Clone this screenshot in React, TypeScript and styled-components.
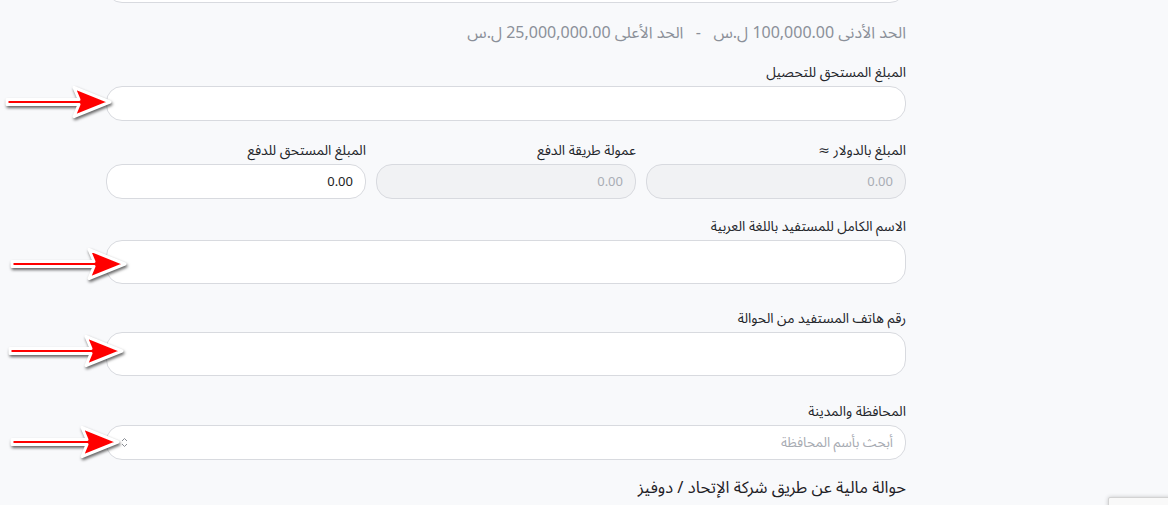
import React from 'react';
import styled, { createGlobalStyle } from 'styled-components';

const GlobalStyle = createGlobalStyle`
  html, body {
    margin: 0;
    padding: 0;
    background: #f8f9fb;
    overflow: hidden;
  }
  body {
    font-family: "Noto Sans Arabic", "DejaVu Sans", "Noto Sans", sans-serif;
  }
`;

const Page = styled.div`
  position: relative;
  width: 1168px;
  height: 505px;
  overflow: hidden;
  padding-left: 106px;
  box-sizing: border-box;
`;

const Form = styled.div`
  direction: rtl;
  width: 800px;
  margin-top: -32px;
  display: flex;
  flex-direction: column;
`;

const Input = styled.div<{ $h?: number; $disabled?: boolean }>`
  box-sizing: border-box;
  height: ${(p) => p.$h ?? 35}px;
  border: 1px solid #d8dadf;
  border-radius: 16px;
  background: ${(p) => (p.$disabled ? '#f1f2f4' : '#ffffff')};
  display: flex;
  align-items: center;
  justify-content: space-between;
  padding: 0 12px 0 14px;
  font-size: 13px;
  color: ${(p) => (p.$disabled ? '#a9adb4' : '#222')};
`;

const Limits = styled.div`
  margin-top: 18px;
  height: 24px;
  line-height: 24px;
  font-size: 16px;
  color: #8b9099;
  white-space: nowrap;
`;

const Field = styled.div<{ $top: number }>`
  margin-top: ${(p) => p.$top}px;
  display: flex;
  flex-direction: column;
  gap: 3px;
`;

const Label = styled.div`
  height: 20px;
  line-height: 20px;
  font-size: 13.8px;
  color: #24262b;
  white-space: nowrap;
`;

const Row = styled.div`
  margin-top: 20px;
  display: grid;
  grid-template-columns: repeat(3, 260px);
  column-gap: 10px;
`;

const Placeholder = styled.span`
  color: #a7abb2;
  font-size: 13.5px;
`;

const Heading = styled.div`
  margin-top: 16px;
  height: 24px;
  line-height: 24px;
  font-size: 16.5px;
  font-weight: normal;
  color: #1f2126;
`;

const Badge = styled.div`
  position: absolute;
  left: 1108px;
  top: 497px;
  width: 80px;
  height: 60px;
  background: #f9f9f9;
  border: 1px solid #d3d3d3;
  border-radius: 2px;
  box-shadow: 0 0 4px rgba(0, 0, 0, 0.2);
`;

const ArrowSvg = styled.svg`
  position: absolute;
  overflow: visible;
  filter: drop-shadow(1px 2px 1.5px rgba(0, 0, 0, 0.6));
`;

function Arrow({ x, y, len }: { x: number; y: number; len: number }) {
  const head = 32;
  const base = len - head;
  return (
    <ArrowSvg style={{ top: y - 16, left: x }} width={len} height={32}>
      <polygon
        points={`1,13.5 ${base},13.5 ${base - 5},1.5 ${len - 1},16 ${base - 5},30.5 ${base},18.5 1,18.5`}
        fill="#ff0000"
        stroke="#ffffff"
        strokeWidth={3}
        strokeLinejoin="round"
      />
    </ArrowSvg>
  );
}

const SelectIcon = () => (
  <svg width="7" height="11" viewBox="0 0 7 11">
    <path d="M1 4 L3.5 1.5 L6 4 M1 7 L3.5 9.5 L6 7" fill="none" stroke="#8a8e95" strokeWidth="1" />
  </svg>
);

export default function App() {
  return (
    <>
      <GlobalStyle />
      <Page>
        <Form>
          <Input />
          <Limits>
            الحد الأدنى 100,000.00 ل.س &nbsp;&nbsp;-&nbsp;&nbsp; الحد الأعلى 25,000,000.00 ل.س
          </Limits>
          <Field $top={18}>
            <Label>المبلغ المستحق للتحصيل</Label>
            <Input />
          </Field>
          <Row>
            <Field $top={0}>
              <Label>المبلغ بالدولار ≈</Label>
              <Input $disabled>0.00</Input>
            </Field>
            <Field $top={0}>
              <Label>عمولة طريقة الدفع</Label>
              <Input $disabled>0.00</Input>
            </Field>
            <Field $top={0}>
              <Label>المبلغ المستحق للدفع</Label>
              <Input>0.00</Input>
            </Field>
          </Row>
          <Field $top={18}>
            <Label>الاسم الكامل للمستفيد باللغة العربية</Label>
            <Input $h={44} />
          </Field>
          <Field $top={25}>
            <Label>رقم هاتف المستفيد من الحوالة</Label>
            <Input $h={44} />
          </Field>
          <Field $top={26}>
            <Label>المحافظة والمدينة</Label>
            <Input>
              <Placeholder>أبحث بأسم المحافظة</Placeholder>
              <SelectIcon />
            </Input>
          </Field>
          <Heading>حوالة مالية عن طريق شركة الإتحاد / دوفيز</Heading>
        </Form>
        <Arrow x={6} y={102} len={105} />
        <Arrow x={11} y={264} len={115} />
        <Arrow x={9} y={351} len={114} />
        <Arrow x={11} y={442} len={108} />
        <Badge />
      </Page>
    </>
  );
}
